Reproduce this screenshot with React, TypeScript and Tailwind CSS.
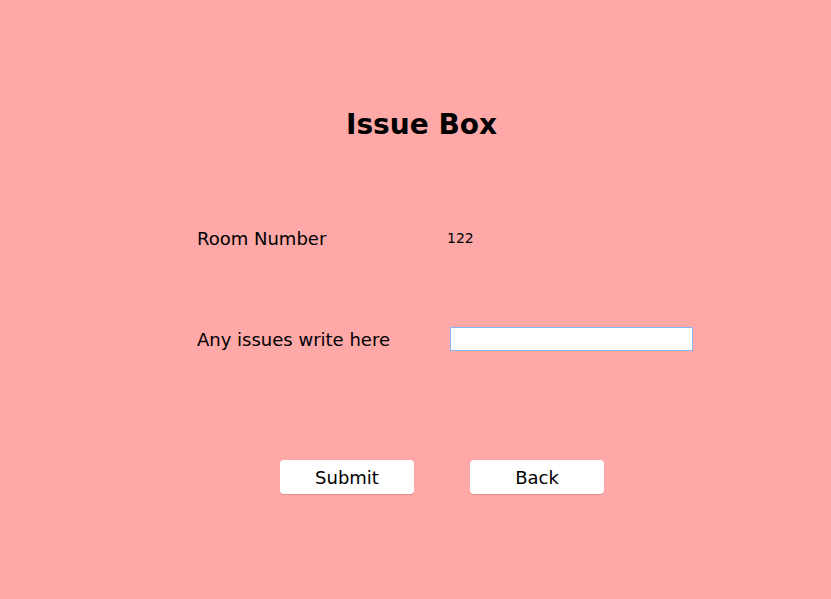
export default function App() {
  return (
    <div
      className="w-full h-[599px] bg-[#ffa8a8] text-black flex flex-col"
      style={{ fontFamily: '"DejaVu Sans", Verdana, sans-serif' }}
    >
      <h1 className="mt-[108px] pl-[12px] text-center text-[28px] font-bold leading-[34px]">Issue Box</h1>

      <div className="mt-[81px] ml-[197px] flex flex-col">
        <div className="flex items-center h-[30px]">
          <span className="w-[250px] text-[18px]">Room Number</span>
          <span className="text-[14px]">122</span>
        </div>
        <div className="mt-[71px] flex items-center h-[30px]">
          <span className="w-[253px] text-[18px]">Any issues write here</span>
          <input
            type="text"
            className="w-[243px] h-[24px] bg-white border border-[#8ab4f8] outline-none px-1 text-[14px]"
          />
        </div>
      </div>

      <div className="mt-[106px] ml-[280px] flex gap-[56px]">
        <button className="w-[134px] h-[34px] bg-white rounded-[4px] text-[18px] shadow-[0_1px_1px_rgba(0,0,0,0.15)]">
          Submit
        </button>
        <button className="w-[134px] h-[34px] bg-white rounded-[4px] text-[18px] shadow-[0_1px_1px_rgba(0,0,0,0.15)]">
          Back
        </button>
      </div>
    </div>
  );
}
